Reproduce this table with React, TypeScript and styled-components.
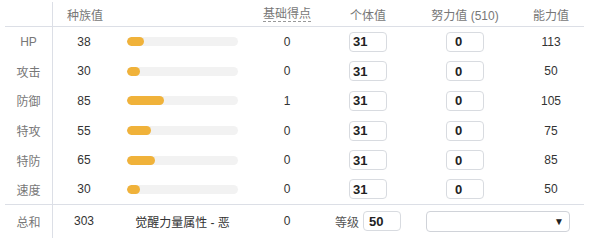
import React from 'react';
import styled, { createGlobalStyle } from 'styled-components';

const GlobalStyle = createGlobalStyle`
  html, body {
    margin: 0;
    padding: 0;
    background: #fff;
  }
  body {
    font-family: "Liberation Sans", "Noto Sans CJK SC", sans-serif;
    font-size: 12px;
    color: #333;
  }
`;

const COLS = '48px 62px 135px 74px 88px 106px 66px';

const Table = styled.div`
  margin: 2px 0 0 5px;
  width: 579px;
`;

const Row = styled.div<{ $height: number; $line?: boolean }>`
  display: grid;
  grid-template-columns: ${COLS};
  height: ${p => p.$height}px;
  align-items: center;
  border-bottom: ${p => (p.$line ? '1px solid #dcdfe6' : 'none')};
  box-sizing: border-box;
`;

const Cell = styled.div<{ $span?: number }>`
  display: flex;
  align-items: center;
  justify-content: center;
  height: 100%;
  grid-column: span ${p => p.$span || 1};
  white-space: nowrap;
`;

const LabelCell = styled(Cell)`
  color: #777;
  border-right: 1px solid #dcdfe6;
  box-sizing: border-box;
  font-size: 12px;
`;

const HeadCell = styled(Cell)<{ $indent?: number }>`
  color: #777;
  justify-content: ${p => (p.$indent ? 'flex-start' : 'center')};
  padding-left: ${p => p.$indent || 0}px;
  box-sizing: border-box;
`;

const Dashed = styled.span`
  border-bottom: 1px dashed #999;
  line-height: 14px;
`;

const BarCell = styled(Cell)`
  justify-content: flex-start;
  padding-left: 12px;
  box-sizing: border-box;
`;

const Track = styled.div`
  width: 111px;
  height: 9px;
  border-radius: 5px;
  background: #f2f2f2;
  overflow: hidden;
`;

const Fill = styled.div`
  height: 100%;
  border-radius: 5px;
  background: #f0b23a;
`;

const NumInput = styled.input<{ $pad: number }>`
  width: 38px;
  height: 20px;
  box-sizing: border-box;
  border: 1px solid #d8dbe0;
  border-radius: 4px;
  padding: 0 0 0 ${p => p.$pad}px;
  font-family: "Liberation Sans", Arial, sans-serif;
  font-size: 13px;
  font-weight: bold;
  color: #222;
  outline: none;
  background: #fff;
`;

const LevelLabel = styled.span`
  color: #555;
  margin-right: 4px;
  font-size: 12px;
`;

const Select = styled.div`
  width: 144px;
  height: 21px;
  box-sizing: border-box;
  border: 1px solid #d0d3d9;
  border-radius: 4px;
  display: flex;
  align-items: center;
  justify-content: flex-end;
  padding-right: 5px;
  font-size: 10px;
  color: #222;
`;

const stats = [
  { name: 'HP', base: 38, pts: 0, value: 113 },
  { name: '攻击', base: 30, pts: 0, value: 50 },
  { name: '防御', base: 85, pts: 1, value: 105 },
  { name: '特攻', base: 55, pts: 0, value: 75 },
  { name: '特防', base: 65, pts: 0, value: 85 },
  { name: '速度', base: 30, pts: 0, value: 50 },
];

const App: React.FC = () => {
  const total = stats.reduce((s, r) => s + r.base, 0);
  return (
    <>
      <GlobalStyle />
      <Table>
        <Row $height={25} $line>
          <LabelCell />
          <HeadCell $span={2} $indent={14}>种族值</HeadCell>
          <HeadCell><Dashed>基础得点</Dashed></HeadCell>
          <HeadCell>个体值</HeadCell>
          <HeadCell>努力值 (510)</HeadCell>
          <HeadCell>能力值</HeadCell>
        </Row>
        {stats.map((s, i) => (
          <Row key={s.name} $height={29.6} $line={i === stats.length - 1}>
            <LabelCell>{s.name}</LabelCell>
            <Cell>{s.base}</Cell>
            <BarCell>
              <Track>
                <Fill style={{ width: `${(s.base / 255) * 100}%` }} />
              </Track>
            </BarCell>
            <Cell>{s.pts}</Cell>
            <Cell>
              <NumInput $pad={3} defaultValue="31" />
            </Cell>
            <Cell>
              <NumInput $pad={8} defaultValue="0" />
            </Cell>
            <Cell>{s.value}</Cell>
          </Row>
        ))}
        <Row $height={33}>
          <LabelCell>总和</LabelCell>
          <Cell>{total}</Cell>
          <Cell>觉醒力量属性 - 恶</Cell>
          <Cell>0</Cell>
          <Cell>
            <LevelLabel>等级</LevelLabel>
            <NumInput $pad={5} defaultValue="50" />
          </Cell>
          <Cell $span={2}>
            <Select>▼</Select>
          </Cell>
        </Row>
      </Table>
    </>
  );
};

export default App;
